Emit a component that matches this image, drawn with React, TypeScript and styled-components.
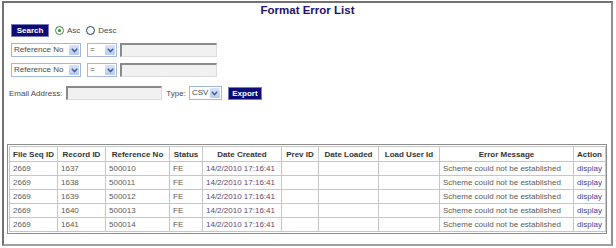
import styled, { createGlobalStyle } from 'styled-components'

const GlobalStyle = createGlobalStyle`
  html, body {
    margin: 0;
    padding: 0;
    background: #ffffff;
    font-family: "Liberation Sans", Arial, sans-serif;
  }
`

const Frame = styled.div`
  box-sizing: border-box;
  width: 611px;
  height: 245px;
  margin: 1px 0 0 2px;
  border-style: solid;
  border-width: 2px;
  border-color: #727272 #8e8e8e #a0a0a0 #727272;
  padding: 0 3px 0 3px;
  overflow: hidden;
`

const Title = styled.h1`
  margin: 0;
  height: 13px;
  line-height: 13px;
  padding-top: 1px;
  text-align: center;
  font-size: 11.5px;
  font-weight: bold;
  color: #24136b;
`

const Form = styled.div`
  display: flex;
  flex-direction: column;
  gap: 6px;
  margin-top: 6px;
`

const Row = styled.div<{ $indent?: number; $top?: number }>`
  display: flex;
  align-items: center;
  height: 14px;
  padding-left: ${(p) => p.$indent ?? 4}px;
  margin-top: ${(p) => p.$top ?? 0}px;
  font-size: 8px;
  color: #4a4a4a;
`

const NavyButton = styled.div<{ $w: number; $gap?: number }>`
  box-sizing: border-box;
  width: ${(p) => p.$w}px;
  height: 13px;
  line-height: 11px;
  background: #0b0b79;
  border: 1px solid #7a7ab8;
  color: #ffffff;
  font-size: 8px;
  font-weight: bold;
  text-align: center;
  margin-left: ${(p) => p.$gap ?? 0}px;
`

const RadioGroup = styled.label`
  display: flex;
  align-items: center;
  gap: 3px;
  margin-left: 6px;
  font-size: 8px;
  color: #4a4a4a;
`

const RadioCircle = styled.span<{ $on?: boolean }>`
  box-sizing: border-box;
  width: 9px;
  height: 9px;
  border-radius: 50%;
  border: 1px solid ${(p) => (p.$on ? '#3b8a3b' : '#1f3f66')};
  background: #fff;
  display: flex;
  align-items: center;
  justify-content: center;
  &::after {
    content: '';
    width: 3px;
    height: 3px;
    border-radius: 50%;
    background: ${(p) => (p.$on ? '#2a8f2a' : 'transparent')};
  }
`

const SelectBox = styled.div<{ $w: number; $gap?: number }>`
  box-sizing: border-box;
  width: ${(p) => p.$w}px;
  height: 14px;
  margin-right: ${(p) => p.$gap ?? 0}px;
  border: 1px solid #a3b8d6;
  background: #fff;
  display: flex;
  align-items: stretch;
  font-size: 8px;
  color: #4a4a4a;
`

const SelectText = styled.span`
  flex: 1;
  padding-left: 2px;
  line-height: 12px;
  white-space: nowrap;
  overflow: hidden;
`

const SelectArrow = styled.span`
  width: 10px;
  margin: 1px;
  background: linear-gradient(#d7e3fb, #b6cbf2);
  border-radius: 1px;
  display: flex;
  align-items: center;
  justify-content: center;
`

const TextBox = styled.div<{ $w: number }>`
  box-sizing: border-box;
  width: ${(p) => p.$w}px;
  height: 14px;
  border-style: solid;
  border-width: 2px 1px 1px 2px;
  border-color: #8a8a8a #dcdcdc #dcdcdc #8a8a8a;
  background: #f1f1f1;
`

const Label = styled.span<{ $left?: number; $right?: number }>`
  margin: 0 ${(p) => p.$right ?? 3}px 0 ${(p) => p.$left ?? 0}px;
  white-space: nowrap;
`

const TableWrap = styled.div`
  margin-top: 44px;
  border: 1px solid #8d8d8d;
  padding: 1px;
  width: 596px;
`

const Table = styled.table`
  width: 596px;
  border-collapse: collapse;
  table-layout: fixed;
  font-size: 8px;
`

const Th = styled.th`
  height: 14px;
  border: 1px solid #c6c6c6;
  color: #333;
  font-weight: bold;
  text-align: center;
  padding: 0;
  white-space: nowrap;
`

const Td = styled.td<{ $tone?: 'date' | 'link' }>`
  height: 13px;
  border: 1px solid #c6c6c6;
  padding: 0 3px;
  color: ${(p) => (p.$tone === 'date' ? '#5e4872' : p.$tone === 'link' ? '#4242a0' : '#5a5a5a')};
  white-space: nowrap;
  overflow: hidden;
`

const Chevron = () => (
  <svg width="7" height="5" viewBox="0 0 7 5">
    <path d="M0.8 0.8 L3.5 3.6 L6.2 0.8" fill="none" stroke="#4a5f8c" strokeWidth="1.5" />
  </svg>
)

const Select = ({ w, text, gap }: { w: number; text: string; gap?: number }) => (
  <SelectBox $w={w} $gap={gap}>
    <SelectText>{text}</SelectText>
    <SelectArrow>
      <Chevron />
    </SelectArrow>
  </SelectBox>
)

const columns = [
  { title: 'File Seq ID', width: 48 },
  { title: 'Record ID', width: 48 },
  { title: 'Reference No', width: 64 },
  { title: 'Status', width: 33 },
  { title: 'Date Created', width: 79 },
  { title: 'Prev ID', width: 37 },
  { title: 'Date Loaded', width: 60 },
  { title: 'Load User Id', width: 61 },
  { title: 'Error Message', width: 134 },
  { title: 'Action', width: 32 },
]

const rows = [1637, 1638, 1639, 1640, 1641].map((id, i) => ({
  fileSeq: '2669',
  record: String(id),
  ref: String(500010 + i),
  status: 'FE',
  created: '14/2/2010 17:16:41',
  error: 'Scheme could not be established',
}))

const App = () => {
  return (
    <>
      <GlobalStyle />
      <Frame>
        <Title>Format Error List</Title>
        <Form>
          <Row>
            <NavyButton $w={38}>Search</NavyButton>
            <RadioGroup>
              <RadioCircle $on />
              Asc
            </RadioGroup>
            <RadioGroup>
              <RadioCircle />
              Desc
            </RadioGroup>
          </Row>
          <Row>
            <Select w={70} text="Reference No" gap={6} />
            <Select w={30} text="=" gap={3} />
            <TextBox $w={97} />
          </Row>
          <Row>
            <Select w={70} text="Reference No" gap={6} />
            <Select w={30} text="=" gap={3} />
            <TextBox $w={97} />
          </Row>
          <Row $indent={2} $top={3}>
            <Label $right={4}>Email Address:</Label>
            <TextBox $w={96} />
            <Label $left={4} $right={3}>Type:</Label>
            <Select w={33} text="CSV" />
            <NavyButton $w={34} $gap={6}>Export</NavyButton>
          </Row>
        </Form>
        <TableWrap>
          <Table>
            <colgroup>
              {columns.map((c) => (
                <col key={c.title} style={{ width: c.width }} />
              ))}
            </colgroup>
            <thead>
              <tr>
                {columns.map((c) => (
                  <Th key={c.title}>{c.title}</Th>
                ))}
              </tr>
            </thead>
            <tbody>
              {rows.map((r) => (
                <tr key={r.record}>
                  <Td>{r.fileSeq}</Td>
                  <Td>{r.record}</Td>
                  <Td>{r.ref}</Td>
                  <Td>{r.status}</Td>
                  <Td $tone="date">{r.created}</Td>
                  <Td />
                  <Td />
                  <Td />
                  <Td>{r.error}</Td>
                  <Td $tone="link">display</Td>
                </tr>
              ))}
            </tbody>
          </Table>
        </TableWrap>
      </Frame>
    </>
  )
}

export default App
